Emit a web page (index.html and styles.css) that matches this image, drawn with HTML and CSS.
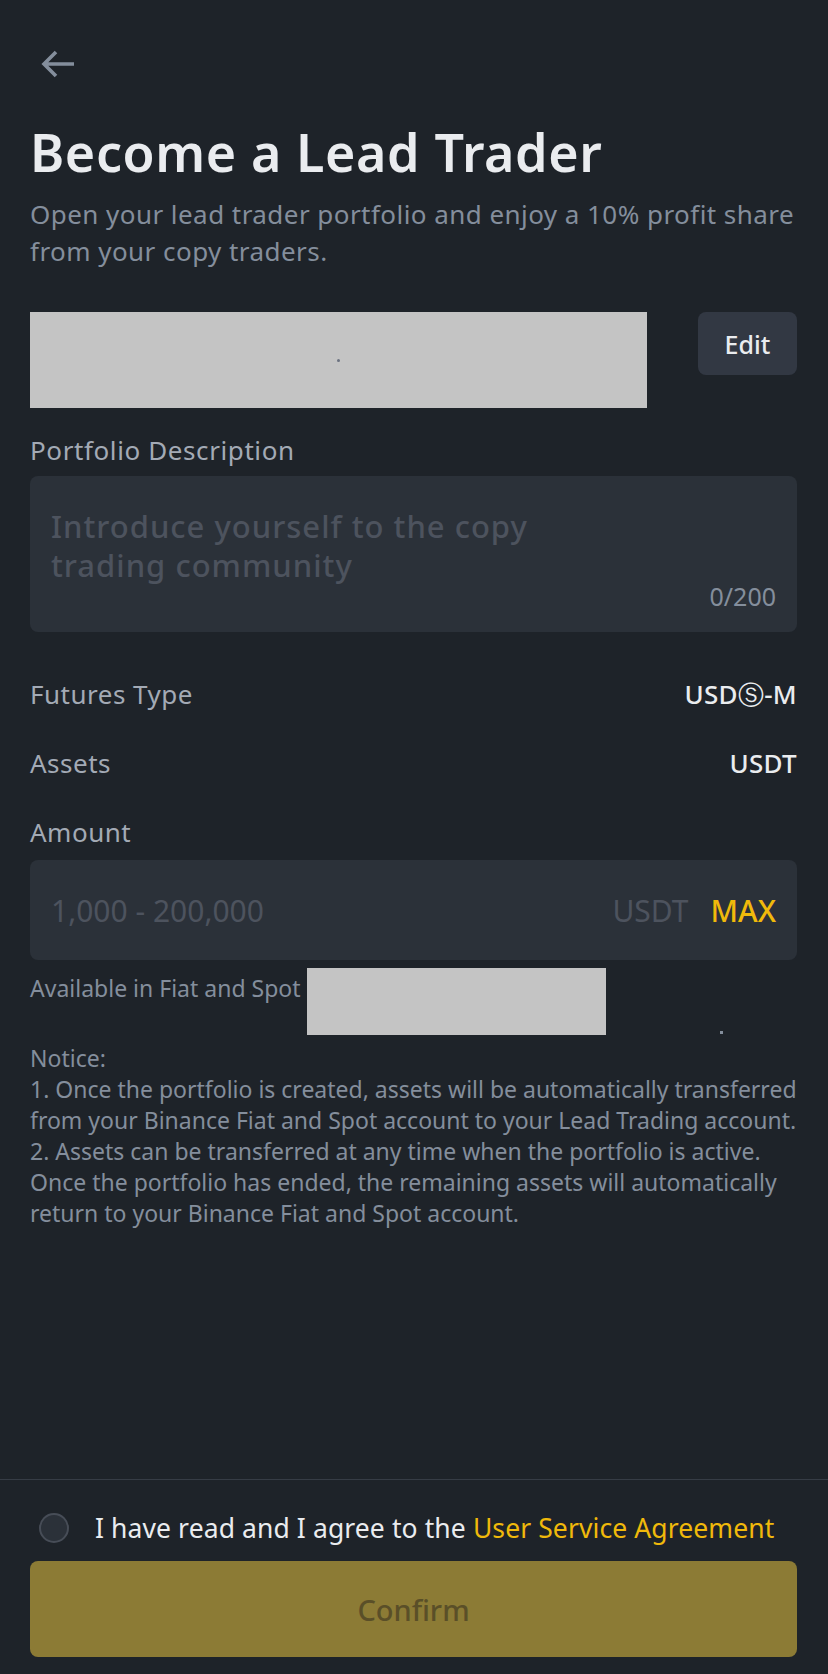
FILE: index.html
```html
<!DOCTYPE html>
<html lang="en">
<head>
    <meta charset="UTF-8">
    <meta name="viewport" content="width=device-width, initial-scale=1.0">
    <title>Become a Lead Trader</title>
    <link rel="stylesheet" href="styles.css">
</head>
<body>
    <div class="screen">
        <main class="content">
            <div class="top-bar">
                <svg class="back-icon" width="36" height="28" viewBox="0 0 36 28">
                    <path d="M16 2 L4 14 L16 26 M4 14 H34" fill="none" stroke="#848e9c" stroke-width="3.6"/>
                </svg>
            </div>

            <h1 class="title">Become a Lead Trader</h1>
            <p class="subtitle">Open your lead trader portfolio and enjoy a 10% profit share from your copy traders.</p>

            <div class="name-row">
                <div class="redacted name-box"><span class="dot"></span></div>
                <button class="edit-btn">Edit</button>
            </div>

            <div class="field-label">Portfolio Description</div>
            <div class="text-box">
                <div class="placeholder">Introduce yourself to the copy<br>trading community</div>
                <div class="counter">0/200</div>
            </div>

            <div class="info-row first-row">
                <span class="info-label">Futures Type</span>
                <span class="info-value">USDⓈ-M</span>
            </div>
            <div class="info-row">
                <span class="info-label">Assets</span>
                <span class="info-value">USDT</span>
            </div>

            <div class="info-row amount-label">
                <span class="info-label">Amount</span>
            </div>
            <div class="amount-box">
                <span class="amount-placeholder">1,000 - 200,000</span>
                <span class="unit">USDT</span>
                <span class="max">MAX</span>
            </div>

            <div class="available-row">
                <span class="available-text">Available in Fiat and Spot</span>
                <div class="redacted balance-box"></div>
                <span class="small-dot"></span>
            </div>

            <p class="notice">
                Notice:<br>
                1. Once the portfolio is created, assets will be automatically transferred<br>
                from your Binance Fiat and Spot account to your Lead Trading account.<br>
                2. Assets can be transferred at any time when the portfolio is active.<br>
                Once the portfolio has ended, the remaining assets will automatically<br>
                return to your Binance Fiat and Spot account.
            </p>
        </main>

        <footer class="footer">
            <label class="agree-row">
                <span class="radio"></span>
                <span class="agree-text">I have read and I agree to the <span class="link">User Service Agreement</span></span>
            </label>
            <button class="confirm-btn">Confirm</button>
        </footer>
    </div>
</body>
</html>
```

FILE: styles.css
```css
* {
    box-sizing: border-box;
}

body {
    margin: 0;
    background-color: #1e2329;
    font-family: "Noto Sans", Roboto, Arial, sans-serif;
    color: #eaecef;
}

.screen {
    min-height: 100vh;
    display: flex;
    flex-direction: column;
}

.content {
    flex: 1;
    padding: 0 31px 0 30px;
}

.top-bar {
    padding-top: 50px;
    height: 78px;
}

.back-icon {
    display: block;
    margin-left: 10px;
}

.title {
    margin: 43px 0 0;
    font-size: 52px;
    line-height: 62px;
    font-weight: 600;
    letter-spacing: 0.6px;
    color: #eaecef;
}

.subtitle {
    margin: 13px 0 0;
    font-size: 26px;
    line-height: 37px;
    letter-spacing: 0.45px;
    color: #848e9c;
}

.name-row {
    display: flex;
    justify-content: space-between;
    align-items: flex-start;
    margin-top: 42px;
}

.redacted {
    background: #c4c4c4;
}

.name-box {
    width: 617px;
    height: 96px;
    display: flex;
    align-items: center;
    justify-content: center;
}

.dot {
    width: 3px;
    height: 3px;
    border-radius: 50%;
    background: #6b7280;
}

.edit-btn {
    width: 99px;
    height: 63px;
    border: none;
    border-radius: 8px;
    background: #323843;
    color: #eaecef;
    font-family: inherit;
    font-size: 25px;
    font-weight: 500;
}

.field-label {
    margin-top: 26px;
    font-size: 26px;
    line-height: 32px;
    letter-spacing: 0.6px;
    color: #a3aab5;
}

.text-box {
    margin-top: 10px;
    height: 156px;
    padding: 31px 21px 0;
    border-radius: 8px;
    background: #2b3139;
}

.placeholder {
    font-size: 31px;
    line-height: 39px;
    font-weight: 500;
    letter-spacing: 1px;
    color: #4d535e;
}

.counter {
    margin-top: -1px;
    text-align: right;
    font-size: 25px;
    line-height: 24px;
    color: #848e9c;
}

.info-row {
    display: flex;
    justify-content: space-between;
    font-size: 26px;
    line-height: 34px;
    margin-top: 35px;
}

.first-row {
    margin-top: 45px;
}

.info-label {
    color: #a3aab5;
    letter-spacing: 0.5px;
}

.info-value {
    color: #eaecef;
    font-weight: 500;
    letter-spacing: 0.3px;
}

.amount-box {
    margin-top: 11px;
    height: 100px;
    padding: 0 21px;
    border-radius: 8px;
    background: #2b3139;
    display: flex;
    align-items: center;
    font-size: 30px;
}

.amount-placeholder {
    flex: 1;
    color: #4d535e;
}

.unit {
    color: #4d535e;
}

.max {
    margin-left: 22px;
    color: #f0b90b;
    font-weight: 500;
}

.available-row {
    display: flex;
    align-items: flex-start;
    margin-top: 8px;
}

.available-text {
    margin-top: 5px;
    font-size: 23px;
    line-height: 30px;
    color: #848e9c;
}

.balance-box {
    width: 299px;
    height: 67px;
    margin-left: 6px;
}

.small-dot {
    align-self: flex-end;
    width: 3px;
    height: 3px;
    margin: 0 0 1px 114px;
    background: #848e9c;
}

.notice {
    margin: 8px 0 0;
    font-size: 23px;
    line-height: 31px;
    color: #848e9c;
    white-space: nowrap;
}

.footer {
    border-top: 1px solid #363c45;
    padding: 33px 31px 17px 30px;
}

.agree-row {
    display: flex;
    align-items: center;
    height: 30px;
}

.radio {
    width: 30px;
    height: 30px;
    margin-left: 9px;
    border: 2px solid #474d57;
    border-radius: 50%;
    background: #2b3139;
}

.agree-text {
    margin-left: 26px;
    font-size: 26.5px;
    letter-spacing: 0.1px;
    color: #eaecef;
}

.link {
    color: #f0b90b;
}

.confirm-btn {
    display: block;
    width: 100%;
    height: 96px;
    margin-top: 18px;
    border: none;
    border-radius: 8px;
    background: #8c7b35;
    color: #5a4f28;
    font-family: inherit;
    font-size: 29px;
    font-weight: 500;
}
```
